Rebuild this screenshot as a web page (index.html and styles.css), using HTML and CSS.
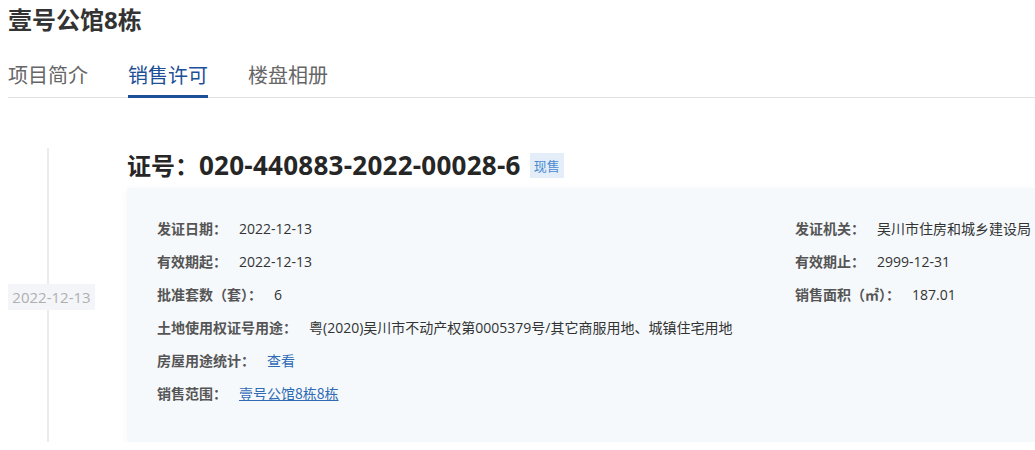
FILE: index.html
```html
<!DOCTYPE html>
<html lang="zh-CN">
<head>
    <meta charset="UTF-8" />
    <title>壹号公馆8栋 - 销售许可</title>
    <link rel="stylesheet" href="styles.css">
</head>
<body>

<div class="page">
    <h1 class="title">壹号公馆8栋</h1>

    <div class="tabs">
        <div class="tab">项目简介</div>
        <div class="tab active">销售许可</div>
        <div class="tab">楼盘相册</div>
    </div>

    <div class="record">
        <div class="record-side">
            <span class="record-date">2022-12-13</span>
        </div>
        <div class="record-main">
            <div class="cert-head">
                <span class="cert-no"><span class="cert-label">证号：</span>020-440883-2022-00028-6</span>
                <span class="tag">现售</span>
            </div>
            <div class="card">
                <div class="row"><span class="label">发证日期：</span><span class="value">2022-12-13</span></div>
                <div class="row"><span class="label">发证机关：</span><span class="value">吴川市住房和城乡建设局</span></div>
                <div class="row"><span class="label">有效期起：</span><span class="value">2022-12-13</span></div>
                <div class="row"><span class="label">有效期止：</span><span class="value">2999-12-31</span></div>
                <div class="row"><span class="label">批准套数（套）：</span><span class="value">6</span></div>
                <div class="row"><span class="label">销售面积（㎡）：</span><span class="value">187.01</span></div>
                <div class="row wide"><span class="label">土地使用权证号用途：</span><span class="value">粤(2020)吴川市不动产权第0005379号/其它商服用地、城镇住宅用地</span></div>
                <div class="row wide"><span class="label">房屋用途统计：</span><a class="value link" href="#">查看</a></div>
                <div class="row wide"><span class="label">销售范围：</span><a class="value link underline" href="#">壹号公馆8栋8栋</a></div>
            </div>
        </div>
    </div>
</div>

</body>
</html>
```

FILE: styles.css
```css
body {
    font-family: "Open Sans", "Noto Sans CJK SC", sans-serif;
    margin: 0;
    padding: 0;
    color: #333;
    background: #fff;
    overflow: hidden;
}

.page {
    padding-left: 8px;
}

.title {
    margin: 0;
    font-size: 24px;
    line-height: 40px;
    font-weight: bold;
    color: #333;
}

.tabs {
    display: flex;
    gap: 40px;
    margin-top: 20px;
    border-bottom: 1px solid #e2e2e2;
}

.tab {
    font-size: 20px;
    line-height: 30px;
    padding-bottom: 5px;
    color: #666;
    border-bottom: 3px solid transparent;
    margin-bottom: -1px;
    font-family: "Noto Sans CJK SC", sans-serif;
}

.tab.active {
    color: #1d4f96;
    border-bottom-color: #1d4f96;
}

.record {
    display: flex;
    margin-top: 50px;
}

.record-side {
    width: 119px;
    position: relative;
    display: flex;
    align-items: center;
}

.record-side::before {
    content: "";
    position: absolute;
    left: 39px;
    top: 0;
    bottom: -20px;
    width: 2px;
    background-color: #ebebeb;
}

.record-date {
    position: relative;
    width: 87px;
    text-align: center;
    font-size: 15px;
    line-height: 26px;
    color: #b0b0b0;
    background-color: #f3f5f8;
    margin-top: 4px;
}

.record-main {
    flex: 1;
}

.cert-head {
    display: flex;
    align-items: center;
    gap: 9px;
    height: 34px;
    margin-bottom: 6px;
}

.cert-no {
    font-size: 26px;
    font-weight: bold;
    color: #262626;
    letter-spacing: 0.25px;
}

.cert-label {
    font-size: 24px;
    letter-spacing: 0;
    font-family: "Noto Sans CJK SC", sans-serif;
}

.tag {
    font-size: 13px;
    line-height: 25px;
    padding: 0 4px;
    color: #4a8ad0;
    background-color: #e4eef9;
    font-family: "Noto Sans CJK SC", sans-serif;
}

.card {
    display: grid;
    grid-template-columns: 638px auto;
    padding: 24px 0 32px 30px;
    background-color: #f5f9fc;
    box-shadow: 0 2px 10px rgba(0, 0, 0, 0.04);
}

.row {
    display: flex;
    font-size: 14px;
    line-height: 33px;
    white-space: nowrap;
}

.row.wide {
    grid-column: 1 / 3;
}

.label {
    font-family: "Noto Sans CJK SC", sans-serif;
    font-weight: bold;
    color: #555;
    margin-right: 12px;
}

.value {
    color: #333;
}

.link {
    color: #2f6bb5;
    text-decoration: none;
    font-family: "Noto Sans CJK SC", sans-serif;
}

.link.underline {
    text-decoration: underline;
}
```
